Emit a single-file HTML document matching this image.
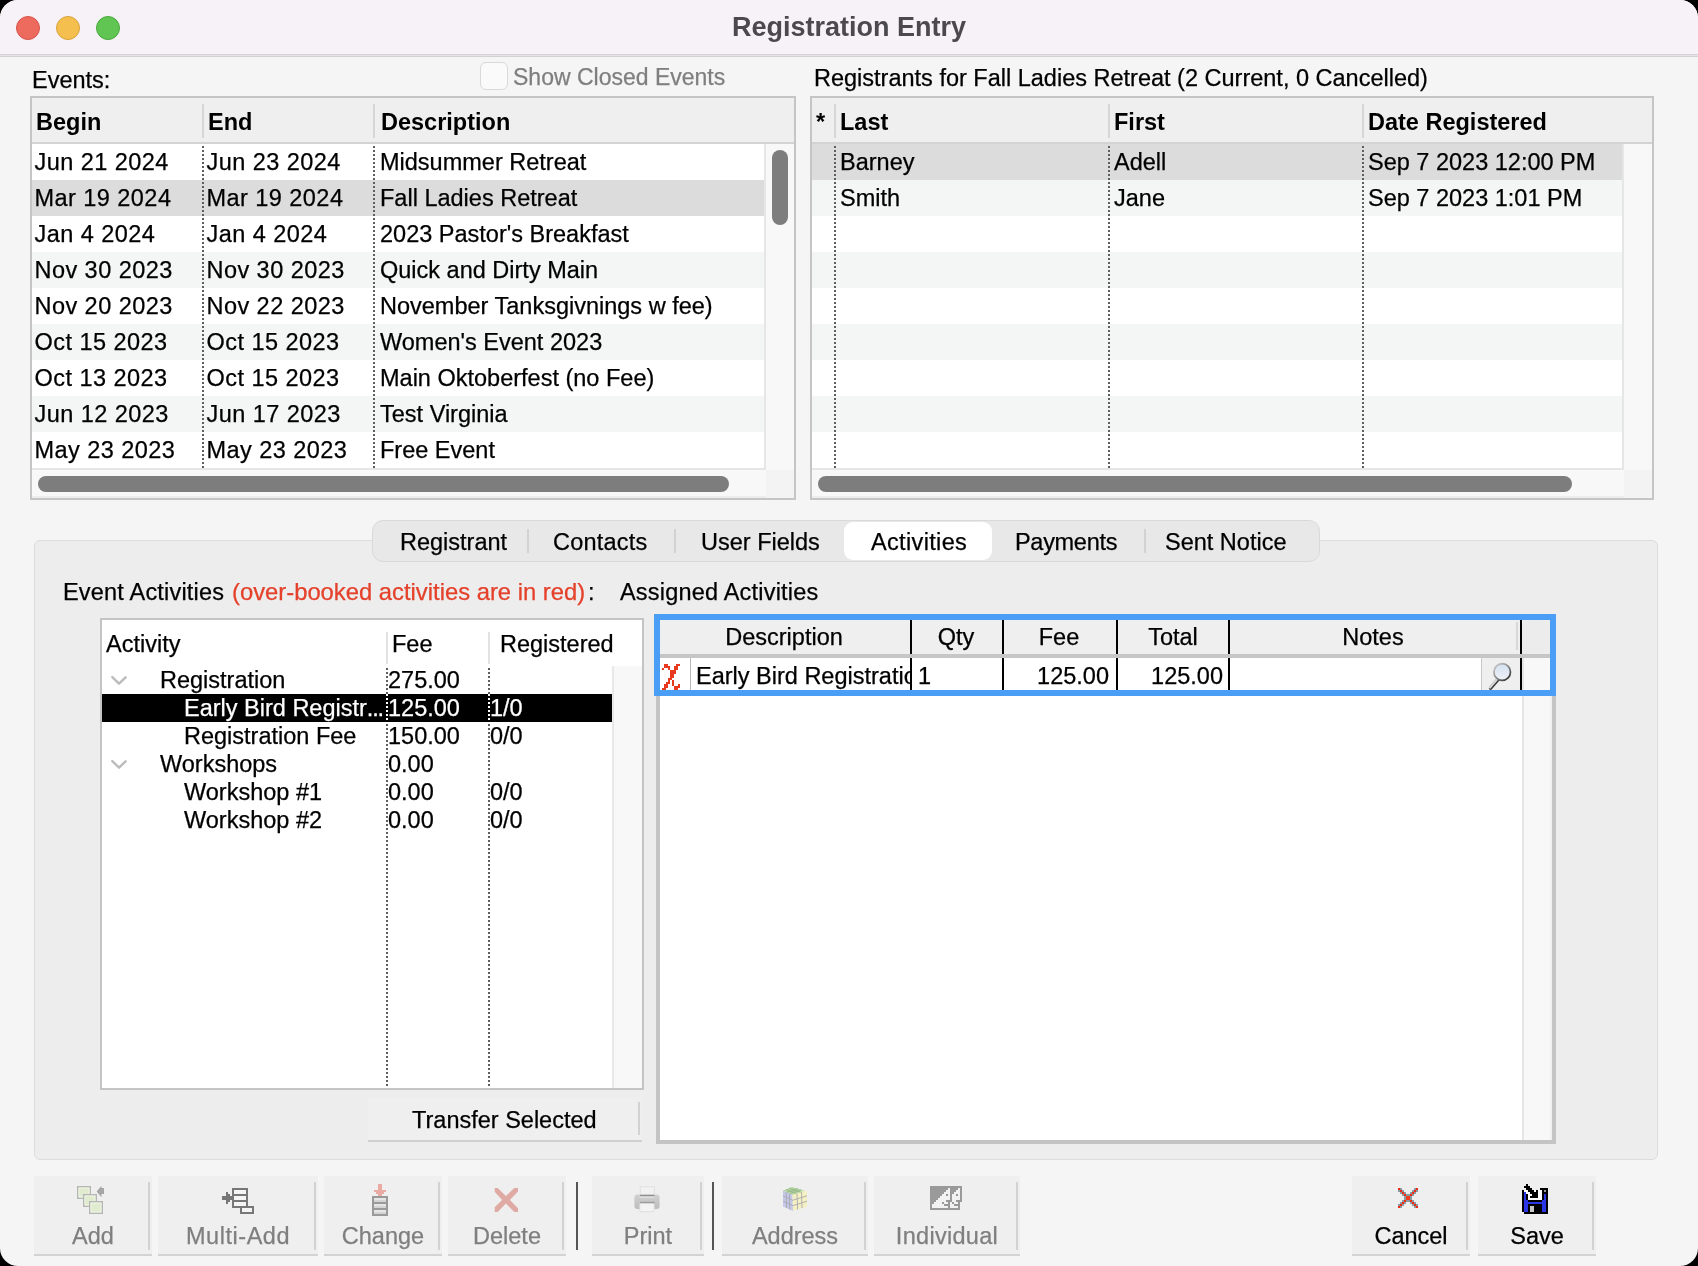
<!DOCTYPE html><html><head><meta charset="utf-8"><style>
*{box-sizing:border-box;margin:0;padding:0}
html,body{width:1698px;height:1266px;overflow:hidden;background:#000}
body{font-family:"Liberation Sans",sans-serif;font-size:23.5px;color:#000;position:relative}
.a{position:absolute}
#win{position:absolute;left:0;top:0;width:1698px;height:1266px;border-radius:18px;overflow:hidden;background:#f5f5f5;will-change:transform}
.t{white-space:nowrap;line-height:36px;-webkit-text-stroke:0.25px currentColor}
.b{font-weight:bold;-webkit-text-stroke:0}
.gray{color:#7f7f7f}
</style></head><body><div id="win">
<div class="a" style="left:0px;top:0px;width:1698px;height:54px;background:#f7f2f7"></div>
<div class="a" style="left:0px;top:54px;width:1698px;height:1px;background:#d6d0d8"></div>
<div class="a" style="left:0px;top:55px;width:1698px;height:1px;background:#e6e3e8"></div>
<div class="a" style="left:0px;top:56px;width:1698px;height:1px;background:#d2d2d2"></div>
<div class="a" style="left:16px;top:16px;width:24px;height:24px;border-radius:50%;background:#ed6a5e;border:1px solid #d55549"></div>
<div class="a" style="left:56px;top:16px;width:24px;height:24px;border-radius:50%;background:#f5bf4f;border:1px solid #d9a23a"></div>
<div class="a" style="left:96px;top:16px;width:24px;height:24px;border-radius:50%;background:#61c554;border:1px solid #4aa83e"></div>
<div class="a b" style="left:0;width:1698px;top:9px;text-align:center;font-size:27px;color:#4c494e;line-height:36px;white-space:nowrap">Registration Entry</div>
<div class="a t" style="left:32px;top:62px;">Events:</div>
<div class="a" style="left:480px;top:62px;width:28px;height:28px;border:1px solid #d9d9d9;border-radius:6px;background:#fafafa"></div>
<div class="a t gray" style="left:513px;top:59px;font-size:23px">Show Closed Events</div>
<div class="a" style="left:30px;top:96px;width:766px;height:404px;border:2px solid #c5c5c5;background:#fff"></div>
<div class="a" style="left:32px;top:98px;width:762px;height:44px;background:#efefef"></div>
<div class="a" style="left:32px;top:142px;width:762px;height:2px;background:#d3d3d3"></div>
<div class="a" style="left:202px;top:104px;width:2px;height:34px;background:#d6d6d6"></div>
<div class="a" style="left:373px;top:104px;width:2px;height:34px;background:#d6d6d6"></div>
<div class="a t b" style="left:36px;top:104px;">Begin</div>
<div class="a t b" style="left:208px;top:104px;">End</div>
<div class="a t b" style="left:381px;top:104px;">Description</div>
<div class="a" style="left:32px;top:144px;width:732px;height:36px;background:#fff"></div>
<div class="a" style="left:32px;top:180px;width:732px;height:36px;background:#dcdcdc"></div>
<div class="a" style="left:32px;top:216px;width:732px;height:36px;background:#fff"></div>
<div class="a" style="left:32px;top:252px;width:732px;height:36px;background:#f4f5f5"></div>
<div class="a" style="left:32px;top:288px;width:732px;height:36px;background:#fff"></div>
<div class="a" style="left:32px;top:324px;width:732px;height:36px;background:#f4f5f5"></div>
<div class="a" style="left:32px;top:360px;width:732px;height:36px;background:#fff"></div>
<div class="a" style="left:32px;top:396px;width:732px;height:36px;background:#f4f5f5"></div>
<div class="a" style="left:32px;top:432px;width:732px;height:36px;background:#fff"></div>
<div class="a t" style="left:34.5px;top:144px;letter-spacing:0.45px">Jun 21 2024</div>
<div class="a t" style="left:206.5px;top:144px;letter-spacing:0.45px">Jun 23 2024</div>
<div class="a t" style="left:380px;top:144px;">Midsummer Retreat</div>
<div class="a t" style="left:34.5px;top:180px;letter-spacing:0.45px">Mar 19 2024</div>
<div class="a t" style="left:206.5px;top:180px;letter-spacing:0.45px">Mar 19 2024</div>
<div class="a t" style="left:380px;top:180px;">Fall Ladies Retreat</div>
<div class="a t" style="left:34.5px;top:216px;letter-spacing:0.45px">Jan 4 2024</div>
<div class="a t" style="left:206.5px;top:216px;letter-spacing:0.45px">Jan 4 2024</div>
<div class="a t" style="left:380px;top:216px;">2023 Pastor's Breakfast</div>
<div class="a t" style="left:34.5px;top:252px;letter-spacing:0.45px">Nov 30 2023</div>
<div class="a t" style="left:206.5px;top:252px;letter-spacing:0.45px">Nov 30 2023</div>
<div class="a t" style="left:380px;top:252px;">Quick and Dirty Main</div>
<div class="a t" style="left:34.5px;top:288px;letter-spacing:0.45px">Nov 20 2023</div>
<div class="a t" style="left:206.5px;top:288px;letter-spacing:0.45px">Nov 22 2023</div>
<div class="a t" style="left:380px;top:288px;">November Tanksgivnings w fee)</div>
<div class="a t" style="left:34.5px;top:324px;letter-spacing:0.45px">Oct 15 2023</div>
<div class="a t" style="left:206.5px;top:324px;letter-spacing:0.45px">Oct 15 2023</div>
<div class="a t" style="left:380px;top:324px;">Women's Event 2023</div>
<div class="a t" style="left:34.5px;top:360px;letter-spacing:0.45px">Oct 13 2023</div>
<div class="a t" style="left:206.5px;top:360px;letter-spacing:0.45px">Oct 15 2023</div>
<div class="a t" style="left:380px;top:360px;">Main Oktoberfest (no Fee)</div>
<div class="a t" style="left:34.5px;top:396px;letter-spacing:0.45px">Jun 12 2023</div>
<div class="a t" style="left:206.5px;top:396px;letter-spacing:0.45px">Jun 17 2023</div>
<div class="a t" style="left:380px;top:396px;">Test Virginia</div>
<div class="a t" style="left:34.5px;top:432px;letter-spacing:0.45px">May 23 2023</div>
<div class="a t" style="left:206.5px;top:432px;letter-spacing:0.45px">May 23 2023</div>
<div class="a t" style="left:380px;top:432px;">Free Event</div>
<div class="a" style="left:202px;top:146px;width:2px;height:322px;background:repeating-linear-gradient(to bottom,#5e5e5e 0 2px,transparent 2px 4px)"></div>
<div class="a" style="left:373px;top:146px;width:2px;height:322px;background:repeating-linear-gradient(to bottom,#5e5e5e 0 2px,transparent 2px 4px)"></div>
<div class="a" style="left:764px;top:144px;width:30px;height:326px;background:#f8f8f8"></div>
<div class="a" style="left:764px;top:144px;width:2px;height:326px;background:#e6e6e6"></div>
<div class="a" style="left:772px;top:150px;width:16px;height:75px;background:#7d7d7d;border-radius:8px"></div>
<div class="a" style="left:32px;top:468px;width:734px;height:2px;background:#e6e6e6"></div>
<div class="a" style="left:32px;top:470px;width:734px;height:28px;background:#f8f8f8"></div>
<div class="a" style="left:32px;top:496px;width:734px;height:2px;background:#ededed"></div>
<div class="a" style="left:766px;top:470px;width:28px;height:28px;background:#f3f3f3"></div>
<div class="a" style="left:38px;top:476px;width:691px;height:16px;background:#7d7d7d;border-radius:8px"></div>
<div class="a t" style="left:814px;top:60px;">Registrants for Fall Ladies Retreat (2 Current, 0 Cancelled)</div>
<div class="a" style="left:810px;top:96px;width:844px;height:404px;border:2px solid #c5c5c5;background:#fff"></div>
<div class="a" style="left:812px;top:98px;width:840px;height:44px;background:#efefef"></div>
<div class="a" style="left:812px;top:142px;width:840px;height:2px;background:#d3d3d3"></div>
<div class="a" style="left:834px;top:104px;width:2px;height:34px;background:#d6d6d6"></div>
<div class="a" style="left:1108px;top:104px;width:2px;height:34px;background:#d6d6d6"></div>
<div class="a" style="left:1362px;top:104px;width:2px;height:34px;background:#d6d6d6"></div>
<div class="a t b" style="left:816px;top:104px;">*</div>
<div class="a t b" style="left:840px;top:104px;">Last</div>
<div class="a t b" style="left:1114px;top:104px;">First</div>
<div class="a t b" style="left:1368px;top:104px;">Date Registered</div>
<div class="a" style="left:812px;top:144px;width:810px;height:36px;background:#dcdcdc"></div>
<div class="a" style="left:812px;top:180px;width:810px;height:36px;background:#f4f5f5"></div>
<div class="a" style="left:812px;top:216px;width:810px;height:36px;background:#fff"></div>
<div class="a" style="left:812px;top:252px;width:810px;height:36px;background:#f4f5f5"></div>
<div class="a" style="left:812px;top:288px;width:810px;height:36px;background:#fff"></div>
<div class="a" style="left:812px;top:324px;width:810px;height:36px;background:#f4f5f5"></div>
<div class="a" style="left:812px;top:360px;width:810px;height:36px;background:#fff"></div>
<div class="a" style="left:812px;top:396px;width:810px;height:36px;background:#f4f5f5"></div>
<div class="a" style="left:812px;top:432px;width:810px;height:36px;background:#fff"></div>
<div class="a t" style="left:816px;top:144px;"></div>
<div class="a t" style="left:840px;top:144px;">Barney</div>
<div class="a t" style="left:1114px;top:144px;">Adell</div>
<div class="a t" style="left:1368px;top:144px;">Sep 7 2023 12:00 PM</div>
<div class="a t" style="left:816px;top:180px;"></div>
<div class="a t" style="left:840px;top:180px;">Smith</div>
<div class="a t" style="left:1114px;top:180px;">Jane</div>
<div class="a t" style="left:1368px;top:180px;">Sep 7 2023 1:01 PM</div>
<div class="a" style="left:834px;top:146px;width:2px;height:322px;background:repeating-linear-gradient(to bottom,#5e5e5e 0 2px,transparent 2px 4px)"></div>
<div class="a" style="left:1108px;top:146px;width:2px;height:322px;background:repeating-linear-gradient(to bottom,#5e5e5e 0 2px,transparent 2px 4px)"></div>
<div class="a" style="left:1362px;top:146px;width:2px;height:322px;background:repeating-linear-gradient(to bottom,#5e5e5e 0 2px,transparent 2px 4px)"></div>
<div class="a" style="left:1622px;top:144px;width:30px;height:326px;background:#f8f8f8"></div>
<div class="a" style="left:1622px;top:144px;width:2px;height:326px;background:#e6e6e6"></div>
<div class="a" style="left:812px;top:468px;width:812px;height:2px;background:#e6e6e6"></div>
<div class="a" style="left:812px;top:470px;width:812px;height:28px;background:#f8f8f8"></div>
<div class="a" style="left:812px;top:496px;width:812px;height:2px;background:#ededed"></div>
<div class="a" style="left:1624px;top:470px;width:28px;height:28px;background:#f3f3f3"></div>
<div class="a" style="left:818px;top:476px;width:754px;height:16px;background:#7d7d7d;border-radius:8px"></div>
<div class="a" style="left:34px;top:540px;width:1624px;height:620px;background:#ededed;border:1px solid #dcdcdc;border-radius:6px"></div>
<div class="a" style="left:372px;top:520px;width:948px;height:42px;background:#e8e8e8;border:1px solid #d9d9d9;border-radius:11px"></div>
<div class="a" style="left:844px;top:522px;width:148px;height:38px;background:#fff;border-radius:9px"></div>
<div class="a" style="left:527px;top:529px;width:2px;height:24px;background:#d2d2d2"></div>
<div class="a" style="left:674px;top:529px;width:2px;height:24px;background:#d2d2d2"></div>
<div class="a" style="left:1144px;top:529px;width:2px;height:24px;background:#d2d2d2"></div>
<div class="a t" style="left:400px;top:524px;">Registrant</div>
<div class="a t" style="left:553px;top:524px;letter-spacing:0.2px">Contacts</div>
<div class="a t" style="left:701px;top:524px;">User Fields</div>
<div class="a t" style="left:871px;top:524px;letter-spacing:0.35px">Activities</div>
<div class="a t" style="left:1015px;top:524px;letter-spacing:-0.3px">Payments</div>
<div class="a t" style="left:1165px;top:524px;">Sent Notice</div>
<div class="a t" style="left:63px;top:574px;letter-spacing:0.2px">Event Activities</div>
<div class="a t" style="left:232px;top:574px;color:#e5402a;font-size:23.8px">(over-booked activities are in red)</div>
<div class="a t" style="left:588px;top:574px;">:</div>
<div class="a t" style="left:620px;top:574px;letter-spacing:0.2px">Assigned Activities</div>
<div class="a" style="left:100px;top:618px;width:544px;height:472px;border:2px solid #c4c4c4;background:#fff"></div>
<div class="a" style="left:386px;top:632px;width:2px;height:32px;background:#e2e2e2"></div>
<div class="a" style="left:488px;top:632px;width:2px;height:32px;background:#e2e2e2"></div>
<div class="a t" style="left:106px;top:626px;">Activity</div>
<div class="a t" style="left:392px;top:626px;">Fee</div>
<div class="a t" style="left:500px;top:626px;">Registered</div>
<div class="a" style="left:612px;top:666px;width:30px;height:422px;background:#f8f8f8"></div>
<div class="a" style="left:612px;top:666px;width:2px;height:422px;background:#e8e8e8"></div>
<div class="a" style="left:102px;top:694px;width:510px;height:28px;background:#000"></div>
<div class="a t" style="left:160px;top:662px;">Registration</div>
<div class="a t" style="left:388px;top:662px;">275.00</div>
<svg class="a" style="left:109px;top:674px" width="20" height="12" viewBox="0 0 20 12"><path d="M3.3 3.1 L10 9.7 L16.6 3.3" fill="none" stroke="#bcbcbc" stroke-width="2.4" stroke-linecap="round" stroke-linejoin="round"/></svg>
<div class="a t" style="left:184px;top:690px;color:#fff">Early Bird Registr<span style="letter-spacing:-1.2px">...</span></div>
<div class="a t" style="left:388px;top:690px;color:#fff">125.00</div>
<div class="a t" style="left:490px;top:690px;color:#fff">1/0</div>
<div class="a t" style="left:184px;top:718px;">Registration Fee</div>
<div class="a t" style="left:388px;top:718px;">150.00</div>
<div class="a t" style="left:490px;top:718px;">0/0</div>
<div class="a t" style="left:160px;top:746px;">Workshops</div>
<div class="a t" style="left:388px;top:746px;">0.00</div>
<svg class="a" style="left:109px;top:758px" width="20" height="12" viewBox="0 0 20 12"><path d="M3.3 3.1 L10 9.7 L16.6 3.3" fill="none" stroke="#bcbcbc" stroke-width="2.4" stroke-linecap="round" stroke-linejoin="round"/></svg>
<div class="a t" style="left:184px;top:774px;">Workshop #1</div>
<div class="a t" style="left:388px;top:774px;">0.00</div>
<div class="a t" style="left:490px;top:774px;">0/0</div>
<div class="a t" style="left:184px;top:802px;">Workshop #2</div>
<div class="a t" style="left:388px;top:802px;">0.00</div>
<div class="a t" style="left:490px;top:802px;">0/0</div>
<div class="a" style="left:386px;top:668px;width:2px;height:420px;background:repeating-linear-gradient(to bottom,#5e5e5e 0 2px,transparent 2px 4px)"></div>
<div class="a" style="left:488px;top:668px;width:2px;height:420px;background:repeating-linear-gradient(to bottom,#5e5e5e 0 2px,transparent 2px 4px)"></div>
<div class="a" style="left:386px;top:694px;width:2px;height:28px;background:repeating-linear-gradient(to bottom,#fff 0 2px,#000 2px 4px)"></div>
<div class="a" style="left:488px;top:694px;width:2px;height:28px;background:repeating-linear-gradient(to bottom,#fff 0 2px,#000 2px 4px)"></div>
<div class="a" style="left:368px;top:1097px;width:274px;height:45px;background:#efefef;border-bottom:2px solid #d0d0d0"></div>
<div class="a" style="left:638px;top:1102px;width:2px;height:33px;background:#d2d2d2"></div>
<div class="a t" style="left:412px;top:1102px;">Transfer Selected</div>
<div class="a" style="left:656px;top:616px;width:900px;height:528px;border:4px solid #c4c4c4;background:#fff"></div>
<div class="a" style="left:660px;top:620px;width:892px;height:34px;background:#efefef"></div>
<div class="a" style="left:1522px;top:658px;width:30px;height:482px;background:#f8f8f8"></div>
<div class="a" style="left:1522px;top:658px;width:2px;height:482px;background:#e6e6e6"></div>
<div class="a" style="left:1550px;top:658px;width:2px;height:482px;background:#f0f0f0"></div>
<div class="a" style="left:1522px;top:620px;width:30px;height:34px;background:#ececec"></div>
<div class="a t" style="left:584.0px;width:400px;text-align:center;top:619px;">Description</div>
<div class="a t" style="left:756.0px;width:400px;text-align:center;top:619px;">Qty</div>
<div class="a t" style="left:859.0px;width:400px;text-align:center;top:619px;">Fee</div>
<div class="a t" style="left:973.0px;width:400px;text-align:center;top:619px;">Total</div>
<div class="a t" style="left:1173.0px;width:400px;text-align:center;top:619px;">Notes</div>
<div class="a" style="left:1516px;top:622px;width:2px;height:28px;background:#d8d8d8"></div>
<div class="a" style="left:910px;top:620px;width:2px;height:70px;background:#000"></div>
<div class="a" style="left:1002px;top:620px;width:2px;height:70px;background:#000"></div>
<div class="a" style="left:1116px;top:620px;width:2px;height:70px;background:#000"></div>
<div class="a" style="left:1228px;top:620px;width:2px;height:70px;background:#000"></div>
<div class="a" style="left:1520px;top:620px;width:2px;height:70px;background:#000"></div>
<div class="a" style="left:660px;top:654px;width:892px;height:4px;background:#c6c6c6"></div>
<div class="a" style="left:690px;top:658px;width:1px;height:32px;background:#b8b8b8"></div>
<div class="a t" style="left:696px;top:658px;width:214px;overflow:hidden">Early Bird Registration</div>
<div class="a t" style="left:918px;top:658px;">1</div>
<div class="a t" style="left:709px;width:400px;text-align:right;top:658px;">125.00</div>
<div class="a t" style="left:823px;width:400px;text-align:right;top:658px;">125.00</div>
<div class="a" style="left:1481px;top:658px;width:39px;height:32px;background:#efefef"></div>
<div class="a" style="left:1481px;top:658px;width:1px;height:32px;background:#c8c8c8"></div>
<svg class="a" style="left:1480px;top:656px" width="40" height="36" viewBox="0 0 40 36"><defs><linearGradient id="mr" x1="0" y1="0" x2="1" y2="1"><stop offset="0" stop-color="#d0d0d0"/><stop offset="0.5" stop-color="#8a8a8a"/><stop offset="1" stop-color="#1e1e1e"/></linearGradient><linearGradient id="mf" x1="0" y1="0" x2="0" y2="1"><stop offset="0" stop-color="#d4e1f2"/><stop offset="1" stop-color="#eff1f6"/></linearGradient></defs><line x1="18.8" y1="22.6" x2="10.6" y2="32.2" stroke="#3a3a3a" stroke-width="3.4" stroke-linecap="round"/><line x1="18.2" y1="22.2" x2="10" y2="31.6" stroke="#dcdcdc" stroke-width="2" stroke-linecap="round"/><circle cx="22.2" cy="16" r="8.3" fill="url(#mf)" stroke="url(#mr)" stroke-width="1.7"/></svg>
<div class="a" style="left:654px;top:614px;width:902px;height:82px;border:6px solid #4a9ef5"></div>
<div class="a" style="left:34px;top:1176px;width:118px;height:80px;background:#efefef;border-bottom:2px solid #d3d3d3"></div>
<div class="a" style="left:148px;top:1182px;width:2px;height:68px;background:#d2d2d2"></div>
<div class="a t gray" style="left:-7.0px;width:200px;text-align:center;top:1218px;">Add</div>
<div class="a" style="left:158px;top:1176px;width:160px;height:80px;background:#efefef;border-bottom:2px solid #d3d3d3"></div>
<div class="a" style="left:314px;top:1182px;width:2px;height:68px;background:#d2d2d2"></div>
<div class="a t gray" style="left:138.0px;width:200px;text-align:center;top:1218px;letter-spacing:0.55px">Multi-Add</div>
<div class="a" style="left:324px;top:1176px;width:118px;height:80px;background:#efefef;border-bottom:2px solid #d3d3d3"></div>
<div class="a" style="left:438px;top:1182px;width:2px;height:68px;background:#d2d2d2"></div>
<div class="a t gray" style="left:283.0px;width:200px;text-align:center;top:1218px;">Change</div>
<div class="a" style="left:448px;top:1176px;width:118px;height:80px;background:#efefef;border-bottom:2px solid #d3d3d3"></div>
<div class="a" style="left:562px;top:1182px;width:2px;height:68px;background:#d2d2d2"></div>
<div class="a t gray" style="left:407.0px;width:200px;text-align:center;top:1218px;">Delete</div>
<div class="a" style="left:592px;top:1176px;width:112px;height:80px;background:#efefef;border-bottom:2px solid #d3d3d3"></div>
<div class="a" style="left:700px;top:1182px;width:2px;height:68px;background:#d2d2d2"></div>
<div class="a t gray" style="left:548.0px;width:200px;text-align:center;top:1218px;">Print</div>
<div class="a" style="left:722px;top:1176px;width:146px;height:80px;background:#efefef;border-bottom:2px solid #d3d3d3"></div>
<div class="a" style="left:864px;top:1182px;width:2px;height:68px;background:#d2d2d2"></div>
<div class="a t gray" style="left:695.0px;width:200px;text-align:center;top:1218px;">Address</div>
<div class="a" style="left:874px;top:1176px;width:146px;height:80px;background:#efefef;border-bottom:2px solid #d3d3d3"></div>
<div class="a" style="left:1016px;top:1182px;width:2px;height:68px;background:#d2d2d2"></div>
<div class="a t gray" style="left:847.0px;width:200px;text-align:center;top:1218px;letter-spacing:0.3px">Individual</div>
<div class="a" style="left:1352px;top:1176px;width:118px;height:80px;background:#efefef;border-bottom:2px solid #d3d3d3"></div>
<div class="a" style="left:1466px;top:1182px;width:2px;height:68px;background:#d2d2d2"></div>
<div class="a t" style="left:1311.0px;width:200px;text-align:center;top:1218px;">Cancel</div>
<div class="a" style="left:1478px;top:1176px;width:118px;height:80px;background:#efefef;border-bottom:2px solid #d3d3d3"></div>
<div class="a" style="left:1592px;top:1182px;width:2px;height:68px;background:#d2d2d2"></div>
<div class="a t" style="left:1437.0px;width:200px;text-align:center;top:1218px;">Save</div>
<div class="a" style="left:576px;top:1182px;width:2px;height:68px;background:#555"></div>
<div class="a" style="left:712px;top:1182px;width:2px;height:68px;background:#555"></div>
<svg class="a" style="left:72px;top:1180px" width="40" height="40" viewBox="0 0 40 40" ><rect x="5.75" y="6.75" width="12.5" height="11.5" fill="#e0ebcf" stroke="#b6b6b6" stroke-width="1.5"/><rect x="7" y="8" width="10" height="9" fill="none" stroke="#eef5e4" stroke-width="1"/><rect x="11.75" y="14.75" width="12.5" height="11.5" fill="#e0ebcf" stroke="#b6b6b6" stroke-width="1.5"/><rect x="13" y="16" width="10" height="9" fill="none" stroke="#eef5e4" stroke-width="1"/><rect x="17.75" y="21.75" width="12.5" height="11.5" fill="#e0ebcf" stroke="#b6b6b6" stroke-width="1.5"/><rect x="19" y="23" width="10" height="9" fill="none" stroke="#eef5e4" stroke-width="1"/><polygon points="24.6,11.5 29.5,5.8 29.5,8 32,8 32,14 29.5,14 29.5,17.2" fill="#a6a6a6"/></svg>
<svg class="a" style="left:216px;top:1180px" width="44" height="40" viewBox="0 0 44 40" shape-rendering="crispEdges"><rect x="18" y="10" width="12" height="16" fill="#f4f4f4"/><rect x="26" y="28" width="10" height="4" fill="#f4f4f4"/><rect x="16" y="8" width="16" height="2" fill="#777777"/><rect x="16" y="8" width="2" height="20" fill="#777777"/><rect x="30" y="8" width="2" height="20" fill="#777777"/><rect x="16" y="26" width="16" height="2" fill="#777777"/><rect x="18" y="14" width="12" height="2" fill="#777777"/><rect x="18" y="20" width="12" height="2" fill="#777777"/><rect x="24" y="26" width="14" height="2" fill="#777777"/><rect x="24" y="26" width="2" height="8" fill="#777777"/><rect x="36" y="26" width="2" height="8" fill="#777777"/><rect x="24" y="32" width="14" height="2" fill="#777777"/><rect x="6" y="16" width="10" height="4" fill="#777777"/><rect x="10" y="12" width="2" height="12" fill="#777777"/><rect x="12" y="14" width="2" height="8" fill="#777777"/><rect x="14" y="16" width="2" height="4" fill="#777777"/></svg>
<svg class="a" style="left:362px;top:1180px" width="36" height="40" viewBox="0 0 36 40" shape-rendering="crispEdges"><rect x="16" y="4" width="4" height="12" fill="#eaaaa4"/><rect x="12" y="10" width="12" height="2" fill="#eaaaa4"/><rect x="14" y="12" width="8" height="2" fill="#eaaaa4"/><rect x="12" y="18" width="12" height="16" fill="#e6e6e6"/><rect x="12" y="20" width="12" height="2" fill="#d4d4d4"/><rect x="12" y="26" width="12" height="2" fill="#d4d4d4"/><rect x="12" y="32" width="12" height="2" fill="#d4d4d4"/><rect x="10" y="16" width="16" height="2" fill="#999999"/><rect x="10" y="16" width="2" height="20" fill="#999999"/><rect x="24" y="16" width="2" height="20" fill="#999999"/><rect x="10" y="34" width="16" height="2" fill="#999999"/><rect x="12" y="22" width="12" height="2" fill="#999999"/><rect x="12" y="28" width="12" height="2" fill="#999999"/></svg>
<svg class="a" style="left:488px;top:1182px" width="36" height="36" viewBox="0 0 36 36" ><polygon points="6.7,6 9.7,6 17.9,14.1 26.3,6 30,6 30,9.4 21.9,17.9 30,26.3 30,30 26.3,30 17.9,21.6 9.7,30 6.7,30 6.7,25.3 14.1,17.9 6.7,9.8" fill="#e0aaa4"/></svg>
<svg class="a" style="left:628px;top:1182px" width="40" height="36" viewBox="0 0 40 36" ><defs><linearGradient id="pg" x1="0" y1="0" x2="0" y2="1"><stop offset="0" stop-color="#d2d2d2"/><stop offset="1" stop-color="#bcbcbc"/></linearGradient></defs><rect x="12.2" y="4.8" width="14.2" height="9" fill="#f1f1f1" stroke="#dcdcdc" stroke-width="0.8"/><rect x="6.4" y="12.4" width="25.2" height="14.6" rx="3" fill="url(#pg)"/><rect x="12" y="12.8" width="14.4" height="1.4" fill="#8e8e8e"/><rect x="12" y="14.6" width="14.4" height="1" fill="#e8e8e8"/><rect x="12" y="19.8" width="14.4" height="1.6" fill="#999"/><rect x="11.7" y="21.4" width="14.5" height="8.3" rx="1" fill="#f3f3f3" stroke="#d8d8d8" stroke-width="0.8"/></svg>
<svg class="a" style="left:776px;top:1180px" width="38" height="38" viewBox="0 0 38 38" ><polygon points="7,10.5 16,7 28.5,10.8 16.5,15" fill="#b5d6a0"/><polygon points="7,10.5 16.5,15 17,31 7,26.5" fill="#c5c7e8"/><polygon points="16.5,15 28.5,10.8 31,11.5 31,26.5 17,31" fill="#f4f0c2"/><path d="M10.2,12 L10.5,28 M13.4,13.5 L13.7,29.5 M7,15.8 L16.7,20.3 M7,21.2 L16.8,25.7" stroke="#a9a9b0" stroke-width="0.9" fill="none"/><path d="M21,13.5 L21.6,29.5 M25.5,12 L26,28 M16.6,20.3 L31,15.8 M16.8,25.7 L31,21.2" stroke="#a9a9b0" stroke-width="0.9" fill="none"/><path d="M10,9.3 L20.5,13.5 M13,8.2 L24.5,12.2 M11,12.3 L22,8.5 M14,13.6 L25,9.6" stroke="#98b88a" stroke-width="0.9" fill="none"/></svg>
<svg class="a" style="left:926px;top:1180px" width="40" height="36" viewBox="0 0 40 36" shape-rendering="crispEdges"><rect x="4" y="6" width="32" height="16" fill="#9a9a9a"/><rect x="4" y="6" width="30" height="24" fill="#9a9a9a"/><rect x="22" y="8" width="2" height="2" fill="#f2f2f2"/><rect x="20" y="10" width="4" height="2" fill="#f2f2f2"/><rect x="18" y="12" width="6" height="2" fill="#f2f2f2"/><rect x="16" y="14" width="8" height="2" fill="#f2f2f2"/><rect x="14" y="16" width="10" height="2" fill="#f2f2f2"/><rect x="12" y="18" width="12" height="2" fill="#f2f2f2"/><rect x="10" y="20" width="10" height="2" fill="#f2f2f2"/><rect x="8" y="22" width="14" height="2" fill="#f2f2f2"/><rect x="6" y="24" width="16" height="2" fill="#f2f2f2"/><rect x="6" y="26" width="16" height="2" fill="#f2f2f2"/><rect x="32" y="8" width="2" height="2" fill="#f2f2f2"/><rect x="30" y="10" width="4" height="2" fill="#f2f2f2"/><rect x="28" y="12" width="6" height="2" fill="#f2f2f2"/><rect x="26" y="14" width="8" height="2" fill="#f2f2f2"/><rect x="26" y="16" width="8" height="2" fill="#f2f2f2"/><rect x="26" y="18" width="8" height="2" fill="#f2f2f2"/><rect x="26" y="20" width="4" height="2" fill="#f2f2f2"/><rect x="24" y="22" width="8" height="2" fill="#f2f2f2"/><rect x="24" y="24" width="8" height="2" fill="#f2f2f2"/><rect x="24" y="26" width="8" height="2" fill="#f2f2f2"/><rect x="20" y="14" width="2" height="2" fill="#9a9a9a"/><rect x="16" y="22" width="2" height="2" fill="#9a9a9a"/><rect x="18" y="24" width="4" height="2" fill="#9a9a9a"/><rect x="30" y="14" width="2" height="2" fill="#9a9a9a"/><rect x="26" y="22" width="2" height="2" fill="#9a9a9a"/><rect x="28" y="24" width="4" height="2" fill="#9a9a9a"/></svg>
<svg class="a" style="left:1392px;top:1182px" width="32" height="32" viewBox="0 0 32 32" shape-rendering="crispEdges"><rect x="6" y="6" width="2" height="2" fill="#f02a10"/><rect x="8" y="8" width="2" height="2" fill="#f02a10"/><rect x="10" y="10" width="2" height="2" fill="#f02a10"/><rect x="12" y="12" width="2" height="2" fill="#f02a10"/><rect x="24" y="6" width="2" height="2" fill="#f02a10"/><rect x="22" y="8" width="2" height="2" fill="#f02a10"/><rect x="20" y="10" width="2" height="2" fill="#f02a10"/><rect x="18" y="12" width="2" height="2" fill="#f02a10"/><rect x="6" y="24" width="2" height="2" fill="#f02a10"/><rect x="8" y="22" width="2" height="2" fill="#f02a10"/><rect x="10" y="20" width="2" height="2" fill="#f02a10"/><rect x="12" y="18" width="2" height="2" fill="#f02a10"/><rect x="24" y="24" width="2" height="2" fill="#f02a10"/><rect x="22" y="22" width="2" height="2" fill="#f02a10"/><rect x="20" y="20" width="2" height="2" fill="#f02a10"/><rect x="18" y="18" width="2" height="2" fill="#f02a10"/><rect x="8" y="6" width="2" height="2" fill="#8a9aa0"/><rect x="6" y="8" width="2" height="2" fill="#8a9aa0"/><rect x="10" y="8" width="2" height="2" fill="#8a9aa0"/><rect x="8" y="10" width="2" height="2" fill="#8a9aa0"/><rect x="12" y="10" width="2" height="2" fill="#8a9aa0"/><rect x="10" y="12" width="2" height="2" fill="#8a9aa0"/><rect x="22" y="6" width="2" height="2" fill="#8a9aa0"/><rect x="24" y="8" width="2" height="2" fill="#8a9aa0"/><rect x="20" y="8" width="2" height="2" fill="#8a9aa0"/><rect x="22" y="10" width="2" height="2" fill="#8a9aa0"/><rect x="18" y="10" width="2" height="2" fill="#8a9aa0"/><rect x="20" y="12" width="2" height="2" fill="#8a9aa0"/><rect x="8" y="24" width="2" height="2" fill="#8a9aa0"/><rect x="6" y="22" width="2" height="2" fill="#8a9aa0"/><rect x="10" y="22" width="2" height="2" fill="#8a9aa0"/><rect x="8" y="20" width="2" height="2" fill="#8a9aa0"/><rect x="12" y="20" width="2" height="2" fill="#8a9aa0"/><rect x="10" y="18" width="2" height="2" fill="#8a9aa0"/><rect x="22" y="24" width="2" height="2" fill="#8a9aa0"/><rect x="24" y="22" width="2" height="2" fill="#8a9aa0"/><rect x="20" y="22" width="2" height="2" fill="#8a9aa0"/><rect x="22" y="20" width="2" height="2" fill="#8a9aa0"/><rect x="18" y="20" width="2" height="2" fill="#8a9aa0"/><rect x="20" y="18" width="2" height="2" fill="#8a9aa0"/><rect x="14" y="12" width="4" height="2" fill="#8a9aa0"/><rect x="14" y="18" width="4" height="2" fill="#8a9aa0"/><rect x="12" y="14" width="2" height="4" fill="#8a9aa0"/><rect x="18" y="14" width="2" height="4" fill="#8a9aa0"/><rect x="14" y="14" width="4" height="4" fill="#ee3c1c"/></svg>
<svg class="a" style="left:1516px;top:1180px" width="36" height="38" viewBox="0 0 36 38" shape-rendering="crispEdges"><rect x="10" y="4" width="2" height="2" fill="#000"/><rect x="8" y="6" width="2" height="2" fill="#000"/><rect x="10" y="6" width="2" height="2" fill="#000"/><rect x="12" y="6" width="2" height="2" fill="#000"/><rect x="10" y="8" width="2" height="2" fill="#000"/><rect x="12" y="8" width="2" height="2" fill="#000"/><rect x="14" y="8" width="2" height="2" fill="#000"/><rect x="24" y="8" width="2" height="2" fill="#000"/><rect x="26" y="8" width="2" height="2" fill="#000"/><rect x="28" y="8" width="2" height="2" fill="#000"/><rect x="30" y="8" width="2" height="2" fill="#000"/><rect x="6" y="10" width="2" height="2" fill="#000"/><rect x="8" y="10" width="2" height="2" fill="#fff"/><rect x="10" y="10" width="2" height="2" fill="#fff"/><rect x="12" y="10" width="2" height="2" fill="#000"/><rect x="14" y="10" width="2" height="2" fill="#000"/><rect x="16" y="10" width="2" height="2" fill="#000"/><rect x="18" y="10" width="2" height="2" fill="#fff"/><rect x="20" y="10" width="2" height="2" fill="#000"/><rect x="22" y="10" width="2" height="2" fill="#fff"/><rect x="24" y="10" width="2" height="2" fill="#fff"/><rect x="26" y="10" width="2" height="2" fill="#000"/><rect x="28" y="10" width="2" height="2" fill="#9c9c9c"/><rect x="30" y="10" width="2" height="2" fill="#000"/><rect x="6" y="12" width="2" height="2" fill="#000"/><rect x="8" y="12" width="2" height="2" fill="#2b36e6"/><rect x="10" y="12" width="2" height="2" fill="#fff"/><rect x="12" y="12" width="2" height="2" fill="#fff"/><rect x="14" y="12" width="2" height="2" fill="#000"/><rect x="16" y="12" width="2" height="2" fill="#000"/><rect x="18" y="12" width="2" height="2" fill="#000"/><rect x="20" y="12" width="2" height="2" fill="#000"/><rect x="22" y="12" width="2" height="2" fill="#fff"/><rect x="24" y="12" width="2" height="2" fill="#fff"/><rect x="26" y="12" width="2" height="2" fill="#000"/><rect x="28" y="12" width="2" height="2" fill="#000"/><rect x="30" y="12" width="2" height="2" fill="#000"/><rect x="6" y="14" width="2" height="2" fill="#000"/><rect x="8" y="14" width="2" height="2" fill="#2b36e6"/><rect x="10" y="14" width="2" height="2" fill="#000"/><rect x="12" y="14" width="2" height="2" fill="#fff"/><rect x="14" y="14" width="2" height="2" fill="#fff"/><rect x="16" y="14" width="2" height="2" fill="#000"/><rect x="18" y="14" width="2" height="2" fill="#000"/><rect x="20" y="14" width="2" height="2" fill="#000"/><rect x="22" y="14" width="2" height="2" fill="#fff"/><rect x="24" y="14" width="2" height="2" fill="#fff"/><rect x="26" y="14" width="2" height="2" fill="#000"/><rect x="28" y="14" width="2" height="2" fill="#2b36e6"/><rect x="30" y="14" width="2" height="2" fill="#000"/><rect x="6" y="16" width="2" height="2" fill="#000"/><rect x="8" y="16" width="2" height="2" fill="#2b36e6"/><rect x="10" y="16" width="2" height="2" fill="#000"/><rect x="12" y="16" width="2" height="2" fill="#fff"/><rect x="14" y="16" width="2" height="2" fill="#000"/><rect x="16" y="16" width="2" height="2" fill="#000"/><rect x="18" y="16" width="2" height="2" fill="#000"/><rect x="20" y="16" width="2" height="2" fill="#000"/><rect x="22" y="16" width="2" height="2" fill="#fff"/><rect x="24" y="16" width="2" height="2" fill="#fff"/><rect x="26" y="16" width="2" height="2" fill="#000"/><rect x="28" y="16" width="2" height="2" fill="#2b36e6"/><rect x="30" y="16" width="2" height="2" fill="#000"/><rect x="6" y="18" width="2" height="2" fill="#000"/><rect x="8" y="18" width="2" height="2" fill="#2b36e6"/><rect x="10" y="18" width="2" height="2" fill="#000"/><rect x="12" y="18" width="2" height="2" fill="#fff"/><rect x="14" y="18" width="2" height="2" fill="#fff"/><rect x="16" y="18" width="2" height="2" fill="#fff"/><rect x="18" y="18" width="2" height="2" fill="#fff"/><rect x="20" y="18" width="2" height="2" fill="#fff"/><rect x="22" y="18" width="2" height="2" fill="#fff"/><rect x="24" y="18" width="2" height="2" fill="#fff"/><rect x="26" y="18" width="2" height="2" fill="#000"/><rect x="28" y="18" width="2" height="2" fill="#2b36e6"/><rect x="30" y="18" width="2" height="2" fill="#000"/><rect x="6" y="20" width="2" height="2" fill="#000"/><rect x="8" y="20" width="2" height="2" fill="#2b36e6"/><rect x="10" y="20" width="2" height="2" fill="#2b36e6"/><rect x="12" y="20" width="2" height="2" fill="#000"/><rect x="14" y="20" width="2" height="2" fill="#000"/><rect x="16" y="20" width="2" height="2" fill="#000"/><rect x="18" y="20" width="2" height="2" fill="#000"/><rect x="20" y="20" width="2" height="2" fill="#000"/><rect x="22" y="20" width="2" height="2" fill="#000"/><rect x="24" y="20" width="2" height="2" fill="#000"/><rect x="26" y="20" width="2" height="2" fill="#2b36e6"/><rect x="28" y="20" width="2" height="2" fill="#2b36e6"/><rect x="30" y="20" width="2" height="2" fill="#000"/><rect x="6" y="22" width="2" height="2" fill="#000"/><rect x="8" y="22" width="2" height="2" fill="#2b36e6"/><rect x="10" y="22" width="2" height="2" fill="#2b36e6"/><rect x="12" y="22" width="2" height="2" fill="#2b36e6"/><rect x="14" y="22" width="2" height="2" fill="#2b36e6"/><rect x="16" y="22" width="2" height="2" fill="#2b36e6"/><rect x="18" y="22" width="2" height="2" fill="#2b36e6"/><rect x="20" y="22" width="2" height="2" fill="#2b36e6"/><rect x="22" y="22" width="2" height="2" fill="#2b36e6"/><rect x="24" y="22" width="2" height="2" fill="#2b36e6"/><rect x="26" y="22" width="2" height="2" fill="#2b36e6"/><rect x="28" y="22" width="2" height="2" fill="#2b36e6"/><rect x="30" y="22" width="2" height="2" fill="#000"/><rect x="6" y="24" width="2" height="2" fill="#000"/><rect x="8" y="24" width="2" height="2" fill="#2b36e6"/><rect x="10" y="24" width="2" height="2" fill="#2b36e6"/><rect x="12" y="24" width="2" height="2" fill="#000"/><rect x="14" y="24" width="2" height="2" fill="#000"/><rect x="16" y="24" width="2" height="2" fill="#000"/><rect x="18" y="24" width="2" height="2" fill="#000"/><rect x="20" y="24" width="2" height="2" fill="#000"/><rect x="22" y="24" width="2" height="2" fill="#000"/><rect x="24" y="24" width="2" height="2" fill="#000"/><rect x="26" y="24" width="2" height="2" fill="#2b36e6"/><rect x="28" y="24" width="2" height="2" fill="#2b36e6"/><rect x="30" y="24" width="2" height="2" fill="#000"/><rect x="6" y="26" width="2" height="2" fill="#000"/><rect x="8" y="26" width="2" height="2" fill="#2b36e6"/><rect x="10" y="26" width="2" height="2" fill="#2b36e6"/><rect x="12" y="26" width="2" height="2" fill="#000"/><rect x="14" y="26" width="2" height="2" fill="#c8c8c8"/><rect x="16" y="26" width="2" height="2" fill="#c8c8c8"/><rect x="18" y="26" width="2" height="2" fill="#000"/><rect x="20" y="26" width="2" height="2" fill="#000"/><rect x="22" y="26" width="2" height="2" fill="#000"/><rect x="24" y="26" width="2" height="2" fill="#000"/><rect x="26" y="26" width="2" height="2" fill="#2b36e6"/><rect x="28" y="26" width="2" height="2" fill="#2b36e6"/><rect x="30" y="26" width="2" height="2" fill="#000"/><rect x="6" y="28" width="2" height="2" fill="#000"/><rect x="8" y="28" width="2" height="2" fill="#2b36e6"/><rect x="10" y="28" width="2" height="2" fill="#2b36e6"/><rect x="12" y="28" width="2" height="2" fill="#000"/><rect x="14" y="28" width="2" height="2" fill="#c8c8c8"/><rect x="16" y="28" width="2" height="2" fill="#c8c8c8"/><rect x="18" y="28" width="2" height="2" fill="#000"/><rect x="20" y="28" width="2" height="2" fill="#000"/><rect x="22" y="28" width="2" height="2" fill="#000"/><rect x="24" y="28" width="2" height="2" fill="#000"/><rect x="26" y="28" width="2" height="2" fill="#2b36e6"/><rect x="28" y="28" width="2" height="2" fill="#2b36e6"/><rect x="30" y="28" width="2" height="2" fill="#000"/><rect x="6" y="30" width="2" height="2" fill="#000"/><rect x="8" y="30" width="2" height="2" fill="#2b36e6"/><rect x="10" y="30" width="2" height="2" fill="#2b36e6"/><rect x="12" y="30" width="2" height="2" fill="#000"/><rect x="14" y="30" width="2" height="2" fill="#c8c8c8"/><rect x="16" y="30" width="2" height="2" fill="#c8c8c8"/><rect x="18" y="30" width="2" height="2" fill="#000"/><rect x="20" y="30" width="2" height="2" fill="#000"/><rect x="22" y="30" width="2" height="2" fill="#000"/><rect x="24" y="30" width="2" height="2" fill="#000"/><rect x="26" y="30" width="2" height="2" fill="#2b36e6"/><rect x="28" y="30" width="2" height="2" fill="#2b36e6"/><rect x="30" y="30" width="2" height="2" fill="#000"/><rect x="8" y="32" width="2" height="2" fill="#000"/><rect x="10" y="32" width="2" height="2" fill="#000"/><rect x="12" y="32" width="2" height="2" fill="#000"/><rect x="14" y="32" width="2" height="2" fill="#000"/><rect x="16" y="32" width="2" height="2" fill="#000"/><rect x="18" y="32" width="2" height="2" fill="#000"/><rect x="20" y="32" width="2" height="2" fill="#000"/><rect x="22" y="32" width="2" height="2" fill="#000"/><rect x="24" y="32" width="2" height="2" fill="#000"/><rect x="26" y="32" width="2" height="2" fill="#000"/><rect x="28" y="32" width="2" height="2" fill="#000"/><rect x="30" y="32" width="2" height="2" fill="#000"/></svg>
<svg class="a" style="left:656px;top:658px" width="34" height="32" viewBox="0 0 34 32" shape-rendering="crispEdges"><rect x="6" y="10" width="2" height="2" fill="#e8391f"/><rect x="8" y="6" width="4" height="4" fill="#e8391f"/><rect x="12" y="8" width="2" height="4" fill="#e8391f"/><rect x="14" y="12" width="6" height="4" fill="#e8391f"/><rect x="14" y="16" width="4" height="4" fill="#e8391f"/><rect x="18" y="8" width="4" height="4" fill="#e8391f"/><rect x="20" y="6" width="4" height="2" fill="#e8391f"/><rect x="12" y="20" width="4" height="2" fill="#e8391f"/><rect x="12" y="22" width="2" height="4" fill="#e8391f"/><rect x="10" y="24" width="2" height="2" fill="#e8391f"/><rect x="8" y="26" width="4" height="4" fill="#e8391f"/><rect x="6" y="30" width="4" height="2" fill="#e8391f"/><rect x="16" y="22" width="2" height="6" fill="#e8391f"/><rect x="18" y="28" width="4" height="4" fill="#e8391f"/><rect x="22" y="26" width="2" height="4" fill="#e8391f"/></svg>
</div></body></html>
